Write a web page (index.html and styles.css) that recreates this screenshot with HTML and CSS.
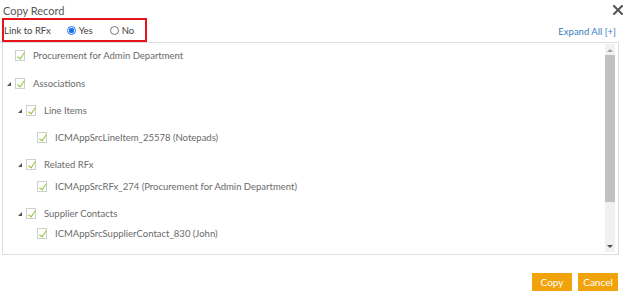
FILE: index.html
```html
<!DOCTYPE html>
<html lang="en">

<head>
    <meta charset="UTF-8">
    <title>Copy Record</title>
    <link rel="stylesheet" href="styles.css">
</head>

<body>
    <!-- Dialog header -->
    <div class="dialog-header">
        <span class="dialog-title">Copy Record</span>
        <span class="close-btn">
            <svg width="10" height="10" viewBox="0 0 10 10">
                <path d="M1 1 L9 9 M9 1 L1 9" stroke="#555" stroke-width="2" stroke-linecap="square" />
            </svg>
        </span>
    </div>

    <!-- Link option + expand -->
    <div class="options-row">
        <div class="link-box">
            <span class="link-label">Link to RFx</span>
            <label class="radio"><span class="radio-dot checked"></span>Yes</label>
            <label class="radio"><span class="radio-dot"></span>No</label>
        </div>
        <a class="expand-all" href="#">Expand All [+]</a>
    </div>

    <!-- Tree -->
    <div class="tree-box">
        <ul class="tree">
            <li class="row first"><span class="toggle"></span><span class="check"></span><span class="label">Procurement for Admin Department</span></li>
            <li class="row gap-l"><span class="toggle open"></span><span class="check"></span><span class="label">Associations</span></li>
            <li class="row lvl1 gap-m"><span class="toggle open"></span><span class="check"></span><span class="label">Line Items</span></li>
            <li class="row lvl2 gap-m"><span class="toggle"></span><span class="check"></span><span class="label">ICMAppSrcLineItem_25578 (Notepads)</span></li>
            <li class="row lvl1 gap-m"><span class="toggle open"></span><span class="check"></span><span class="label">Related RFx</span></li>
            <li class="row lvl2 gap-s"><span class="toggle"></span><span class="check"></span><span class="label">ICMAppSrcRFx_274 (Procurement for Admin Department)</span></li>
            <li class="row lvl1 gap-m"><span class="toggle open"></span><span class="check"></span><span class="label">Supplier Contacts</span></li>
            <li class="row lvl2 gap-xs"><span class="toggle"></span><span class="check"></span><span class="label">ICMAppSrcSupplierContact_830 (John)</span></li>
        </ul>
        <div class="scrollbar">
            <span class="arrow up"></span>
            <span class="thumb"></span>
            <span class="arrow down"></span>
        </div>
    </div>

    <!-- Footer buttons -->
    <div class="dialog-footer">
        <button class="btn">Copy</button>
        <button class="btn">Cancel</button>
    </div>
</body>

</html>
```

FILE: styles.css
```css
body {
    font-family: 'Lato', 'Open Sans', sans-serif;
    background-color: #fff;
    margin: 0;
    padding: 0 11px 0 2px;
    color: #666;
    font-size: 9.5px;
}

/* Header */
.dialog-header {
    display: flex;
    justify-content: space-between;
    align-items: center;
    height: 16px;
    padding-top: 2px;
    margin-right: -4px;
}

.dialog-title {
    font-size: 11px;
    color: #555;
    padding-left: 1px;
}

.close-btn {
    display: flex;
    width: 10px;
    height: 10px;
}

/* Options row */
.options-row {
    display: flex;
    justify-content: space-between;
    align-items: center;
}

.link-box {
    display: flex;
    align-items: center;
    height: 20px;
    width: 141px;
    border: 2px solid #e8141b;
    color: #444;
    white-space: nowrap;
}

.link-label {
    flex-shrink: 0;
    margin-right: 16px;
}

.radio {
    display: flex;
    align-items: center;
    margin-right: 17px;
}

.radio-dot {
    width: 7px;
    height: 7px;
    border: 1px solid #777;
    border-radius: 50%;
    margin-right: 3px;
    box-sizing: content-box;
}

.radio-dot.checked {
    border-color: #1a73e8;
    background: radial-gradient(circle, #1a73e8 0, #1a73e8 2.5px, #fff 3px);
}

.expand-all {
    color: #3a7cc3;
    text-decoration: none;
    margin-right: 3px;
    margin-top: 2px;
}

/* Tree */
.tree-box {
    display: flex;
    border: 1px solid #ddd;
    height: 211px;
    padding-right: 3px;
}

.tree {
    list-style: none;
    margin: 0;
    padding: 0 0 0 1px;
    flex: 1;
}

.row {
    display: flex;
    align-items: center;
    height: 20px;
}

.row.first { margin-top: 2px; }
.row.gap-l { margin-top: 8px; }
.row.gap-m { margin-top: 7px; }
.row.gap-s { margin-top: 2px; }
.row.gap-xs { margin-top: 0; }

.row.lvl1 { padding-left: 11px; }
.row.lvl2 { padding-left: 22px; }

.toggle {
    width: 11px;
    height: 10px;
    position: relative;
}

.toggle.open::after {
    content: "";
    position: absolute;
    left: 3px;
    top: 4px;
    border-style: solid;
    border-width: 0 0 4px 4px;
    border-color: transparent transparent #555 transparent;
}

.check {
    width: 8px;
    height: 9px;
    border: 1px solid #cfcfcf;
    position: relative;
    margin-right: 8px;
}

.check::after {
    content: "";
    position: absolute;
    left: 3px;
    top: 0;
    width: 3px;
    height: 7px;
    border: solid #93c83a;
    border-width: 0 1px 1px 0;
    transform: rotate(35deg);
}

.label {
    color: #6a6a6a;
}

/* Scrollbar */
.scrollbar {
    width: 10px;
    margin: 1px 0 2px;
    background-color: #f1f1f1;
    display: flex;
    flex-direction: column;
    align-items: center;
}

.arrow {
    width: 0;
    height: 0;
    border-left: 3px solid transparent;
    border-right: 3px solid transparent;
    margin: 5px 0 3px;
}

.arrow.up {
    border-bottom: 3px solid #a3a3a3;
}

.arrow.down {
    border-top: 3px solid #505050;
    margin: auto 0 4px;
}

.thumb {
    width: 10px;
    height: 147px;
    background-color: #c1c1c1;
}

/* Footer */
.dialog-footer {
    display: flex;
    justify-content: flex-end;
    gap: 6px;
    margin-top: 18px;
    margin-right: 1px;
}

.btn {
    font-family: 'Lato', 'Open Sans', sans-serif;
    font-size: 10px;
    height: 18px;
    width: 40px;
    padding: 0;
    background-color: #f0a30a;
    color: white;
    border: none;
    border-radius: 0;
    cursor: pointer;
}
```
